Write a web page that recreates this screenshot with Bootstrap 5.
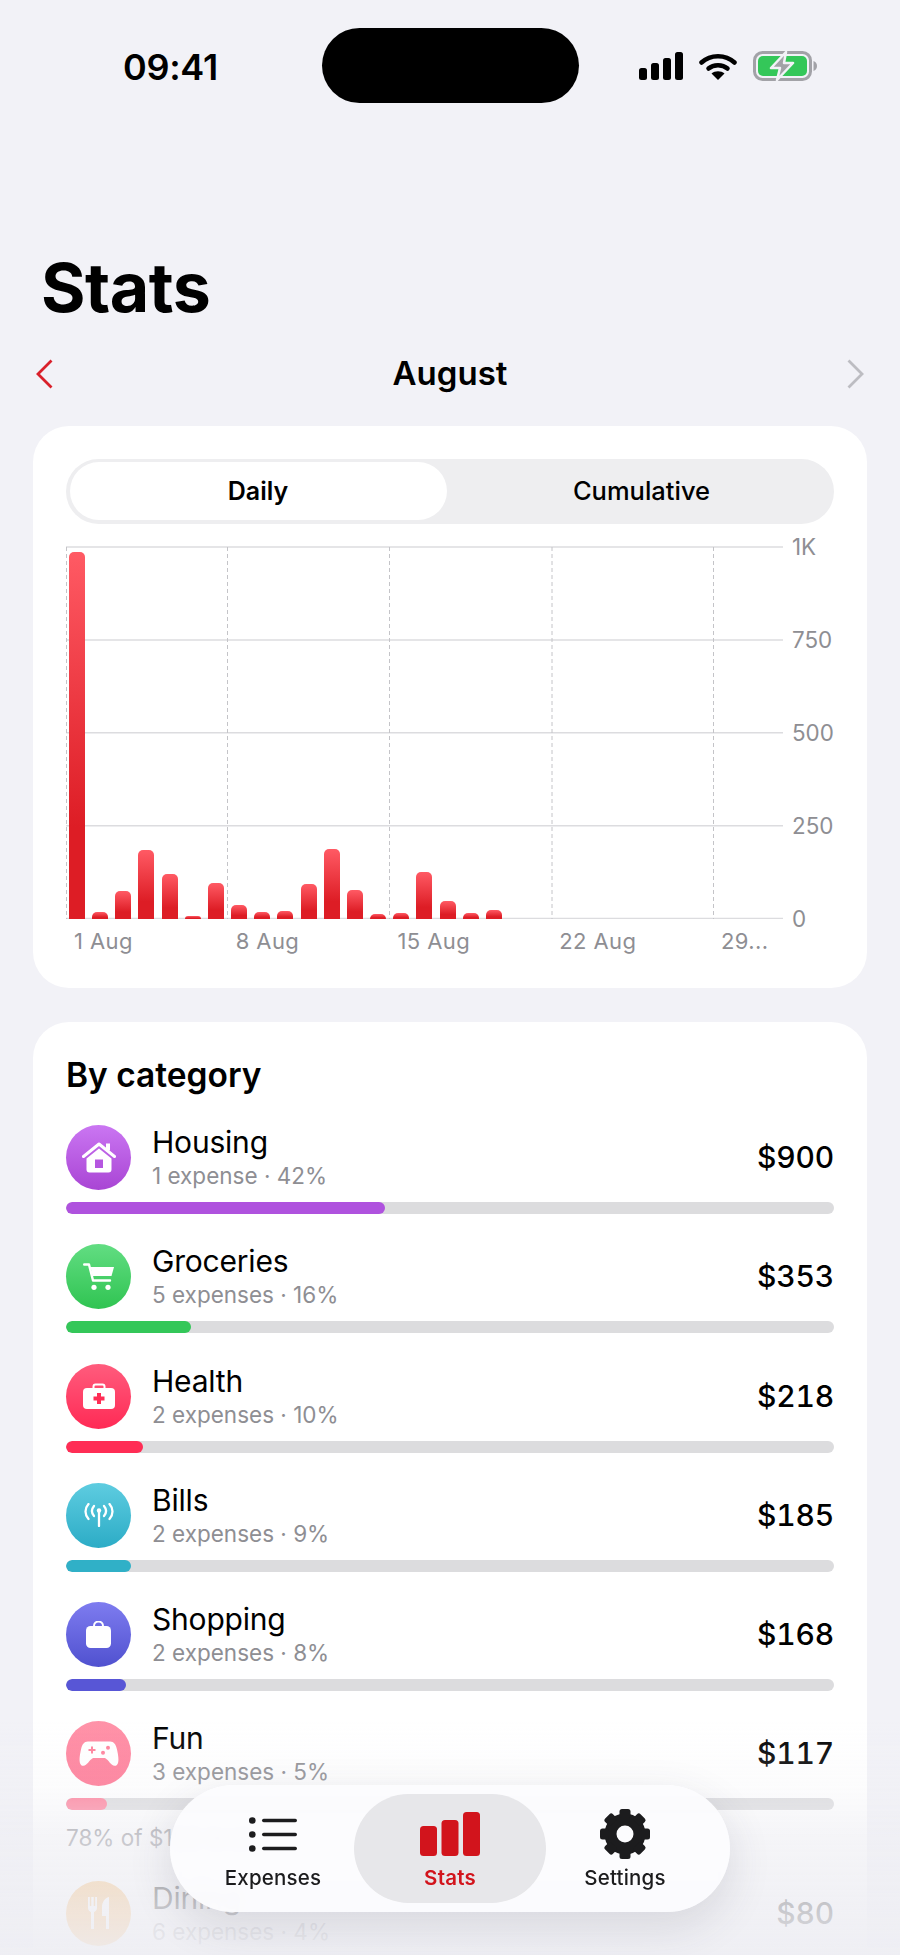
<!DOCTYPE html>
<html lang="en">

<head>
    <meta charset="UTF-8">
    <meta name="viewport" content="width=device-width, initial-scale=1.0">
    <title>Stats</title>
    <link href="https://cdn.jsdelivr.net/npm/bootstrap@5.3.0/dist/css/bootstrap.min.css" rel="stylesheet">
    <style>
        html, body { height: 1955px; overflow: hidden; }
        body { background: #f2f2f7; font-family: Inter, "Liberation Sans", sans-serif; color: #000; }

        /* status bar */
        .status-top { height: 103px; padding: 28px 0 0 123px; }
        .clock { width: 95px; margin-top: 2px; font-size: 36px; font-weight: 600; line-height: 75px; letter-spacing: -0.3px; white-space: nowrap; }
        .island { width: 257px; height: 75px; margin-left: 104px; background: #000; border-radius: 38px; }
        .status-icons { height: 80px; margin: -2px 0 0 60px; gap: 16px; }

        .page-title { margin: 144px 0 0 41px; font-size: 68px; font-weight: 700; line-height: 80px; letter-spacing: -0.5px; }
        .month-row { height: 60px; margin-top: 17px; padding: 0 36px; }
        .month-name { font-size: 33px; font-weight: 600; }

        /* cards */
        .panel { margin: 0 33px; border: 0; border-radius: 36px; background: #fff; }
        .chart-panel { height: 562.5px; margin-top: 21.5px; padding: 33px 33px 0; }
        .cat-panel { margin-top: 34px; padding: 32px 33px 0; }

        .segment { height: 65px; padding: 3.5px; background: #eeeef0; border-radius: 33px; }
        .segment .nav-link { height: 58px; padding: 0; color: #000; font-size: 25.5px; font-weight: 500; line-height: 58px; border-radius: 29px; }
        .segment .nav-link:first-child { width: 377px; flex-shrink: 0; }
        .segment .nav-link:last-child { padding-left: 6px; }
        .segment .nav-link.active { background: #fff; color: #000; font-weight: 600; font-size: 25px; }

        /* chart */
        .plot-wrap { margin-top: 22px; }
        .plot { width: 717px; height: 373px; flex-shrink: 0; }
        .plot-lines { position: absolute; inset: 0; }
        .plot-bars { position: absolute; inset: 0 0 0 3px; gap: 7.17px; }
        .day-bar { width: 16px; border-radius: 5px 5px 0 0; background: linear-gradient(#ff5a64, #dd1d25 75%); }
        .axis-y { width: 51px; height: 372px; margin-top: 1px; padding-left: 9px; color: #8e8e93; font-size: 22.4px; }
        .axis-y span { display: block; height: 0; line-height: 0; }
        .axis-x { width: 717px; margin-top: 8px; color: #8e8e93; font-size: 22px; line-height: 28px; letter-spacing: .4px; }
        .axis-x span { flex: 0 0 161.75px; padding-left: 8px; white-space: nowrap; }

        /* category rows */
        .cat-title { margin: 0 0 29px; font-size: 33.5px; font-weight: 600; line-height: 42px; }
        .cat-row { margin-bottom: 30.3px; }
        .cat-icon { width: 65px; height: 65px; margin-right: 21px; border-radius: 50%; }
        .cat-name { font-size: 30px; line-height: 35px; letter-spacing: -0.2px; }
        .cat-sub { margin: 1px 0 -1px; color: #8e8e93; font-size: 22.5px; line-height: 30px; }
        .cat-amount { font-size: 30px; font-weight: 500; font-variant-numeric: tabular-nums; letter-spacing: -0.2px; }
        .cat-track { height: 12px; margin-top: 12px; background: #dcdcde; border-radius: 6px; }
        .cat-track .progress-bar { border-radius: 6px; }
        .limit-note { margin: 14px 0 -2px; color: #8e8e93; font-size: 22.5px; line-height: 28px; }

        .bg-housing { background: linear-gradient(#ca76f2, #a945d4); }
        .bg-groceries { background: linear-gradient(#62dd82, #30c452); }
        .bg-health { background: linear-gradient(#ff5c7d, #ff2a55); }
        .bg-bills { background: linear-gradient(#5ecce0, #2cacc6); }
        .bg-shopping { background: linear-gradient(#7e7cf0, #5051cf); }
        .bg-fun { background: linear-gradient(#ff93a9, #ff7391); }
        .bg-dining { background: linear-gradient(#f7b55e, #ff9f2e); }

        /* fade and floating tabs */
        .bottom-fade {
            position: fixed; left: 0; right: 0; top: 1720px; height: 235px; pointer-events: none;
            background: linear-gradient(rgba(238, 238, 243, 0) 0, rgba(238, 238, 243, .2) 70px, rgba(238, 238, 243, .6) 117px, rgba(238, 238, 243, .83) 185px, rgba(238, 238, 243, .95) 235px);
        }
        .float-tabs {
            position: fixed; left: 170px; top: 1785px; width: 560px; height: 127px;
            padding: 9px 26px 9px 22px; flex-wrap: nowrap;
            background: rgba(252, 252, 254, .93); border-radius: 64px;
            box-shadow: 0 14px 44px rgba(60, 60, 80, .14);
            backdrop-filter: blur(5px);
        }
        .float-tabs .nav-link { padding: 15px 0 0; color: #1c1c1e; font-size: 20.5px; font-weight: 500; line-height: 27px; letter-spacing: .2px; text-align: center; }
        .float-tabs .tab-one { width: 162px; }
        .float-tabs .tab-two { width: 192px; }
        .float-tabs .tab-three { width: 158px; }
        .float-tabs .nav-link.active { background: #e7e7ea; color: #d2141c; font-weight: 600; border-radius: 55px; }
        .tab-glyph { height: 50px; margin-bottom: 5px; }
    </style>
</head>

<body>
    <!-- Status bar -->
    <div class="status-top d-flex align-items-start">
        <div class="clock">09:41</div>
        <div class="island"></div>
        <div class="status-icons d-flex align-items-center">
            <svg width="44" height="28" viewBox="0 0 44 28" fill="#000">
                <rect x="0" y="16" width="8" height="12" rx="2.5" />
                <rect x="12" y="11" width="8" height="17" rx="2.5" />
                <rect x="24" y="6" width="8" height="22" rx="2.5" />
                <rect x="36" y="0" width="8" height="28" rx="2.5" />
            </svg>
            <svg width="38" height="27" viewBox="0 0 38 27">
                <path d="M2.5 9.5C11.5 1 26.5 1 35.5 9.5" fill="none" stroke="#000" stroke-width="4.5" stroke-linecap="round" />
                <path d="M9.5 15.5C14.5 11 23.5 11 28.5 15.5" fill="none" stroke="#000" stroke-width="4.5" stroke-linecap="round" />
                <path d="M19 27L12.5 20.5C16 17.5 22 17.5 25.5 20.5Z" fill="#000" />
            </svg>
            <svg width="64" height="30" viewBox="0 0 64 30">
                <rect x="1.5" y="1.5" width="56" height="27" rx="8" fill="none" stroke="#a2a2a7" stroke-width="3" />
                <rect x="5" y="5" width="49" height="20" rx="5" fill="#34c759" />
                <path d="M60.5 10c2 .5 3.5 2.5 3.5 5s-1.5 4.5-3.5 5z" fill="#a2a2a7" />
                <path d="M33 1L18 17h9l-3 12 16-17h-9z" fill="#a2a2a7" stroke="#f2f2f7" stroke-width="2.5" stroke-linejoin="round" />
            </svg>
        </div>
    </div>

    <h1 class="page-title">Stats</h1>

    <div class="month-row d-flex align-items-center justify-content-between">
        <svg width="17" height="30" viewBox="0 0 17 30" fill="none" stroke="#d9202a" stroke-width="2.8">
            <path d="M15.5 1.5L2 15l13.5 13.5" />
        </svg>
        <div class="month-name">August</div>
        <svg width="17" height="30" viewBox="0 0 17 30" fill="none" stroke="#bdbdc2" stroke-width="2.8">
            <path d="M1.5 1.5L15 15 1.5 28.5" />
        </svg>
    </div>

    <!-- Chart card -->
    <div class="card panel chart-panel">
        <div class="nav segment flex-nowrap">
            <a class="nav-link active text-center" href="#">Daily</a>
            <a class="nav-link flex-fill text-center" href="#">Cumulative</a>
        </div>

        <div class="plot-wrap d-flex">
            <div class="plot position-relative">
                <svg class="plot-lines" width="717" height="373" viewBox="0 0 717 373">
                    <g stroke="#dcdcdf" stroke-width="1.5">
                        <line x1="0" y1="1" x2="717" y2="1" />
                        <line x1="0" y1="93.9" x2="717" y2="93.9" />
                        <line x1="0" y1="186.8" x2="717" y2="186.8" />
                        <line x1="0" y1="279.7" x2="717" y2="279.7" />
                        <line x1="0" y1="372.4" x2="717" y2="372.4" />
                    </g>
                    <g stroke="#c4c4c8" stroke-width="1" stroke-dasharray="4 3">
                        <line x1="0.5" y1="1" x2="0.5" y2="373" />
                        <line x1="161.5" y1="1" x2="161.5" y2="373" />
                        <line x1="323.5" y1="1" x2="323.5" y2="373" />
                        <line x1="486" y1="1" x2="486" y2="373" />
                        <line x1="647.5" y1="1" x2="647.5" y2="373" />
                    </g>
                </svg>
                <div class="plot-bars d-flex align-items-end">
                    <div class="day-bar" style="height:366.6px"></div>
                    <div class="day-bar" style="height:6.7px"></div>
                    <div class="day-bar" style="height:27.7px"></div>
                    <div class="day-bar" style="height:68.8px"></div>
                    <div class="day-bar" style="height:44.8px"></div>
                    <div class="day-bar" style="height:3px"></div>
                    <div class="day-bar" style="height:35.1px"></div>
                    <div class="day-bar" style="height:14px"></div>
                    <div class="day-bar" style="height:6.7px"></div>
                    <div class="day-bar" style="height:7.4px"></div>
                    <div class="day-bar" style="height:34.4px"></div>
                    <div class="day-bar" style="height:69.6px"></div>
                    <div class="day-bar" style="height:28.9px"></div>
                    <div class="day-bar" style="height:4.4px"></div>
                    <div class="day-bar" style="height:5.2px"></div>
                    <div class="day-bar" style="height:47px"></div>
                    <div class="day-bar" style="height:17.8px"></div>
                    <div class="day-bar" style="height:5.2px"></div>
                    <div class="day-bar" style="height:8.1px"></div>
                </div>
            </div>
            <div class="axis-y d-flex flex-column justify-content-between">
                <span>1K</span>
                <span>750</span>
                <span>500</span>
                <span>250</span>
                <span>0</span>
            </div>
        </div>
        <div class="axis-x d-flex">
            <span>1 Aug</span>
            <span>8 Aug</span>
            <span>15 Aug</span>
            <span>22 Aug</span>
            <span>29...</span>
        </div>
    </div>

    <!-- Categories card -->
    <div class="card panel cat-panel">
        <h2 class="cat-title">By category</h2>

        <div class="cat-row">
            <div class="d-flex align-items-center">
                <div class="cat-icon bg-housing d-flex align-items-center justify-content-center flex-shrink-0">
                    <svg width="34" height="31" viewBox="0 0 34 31" fill="#fff">
                        <path d="M1.5 14.5L17 2l15.5 12.5" fill="none" stroke="#fff" stroke-width="3" stroke-linecap="round" stroke-linejoin="round" />
                        <rect x="24" y="1.5" width="4" height="7" />
                        <path d="M17 6.5L29.5 16.5V27.5a3 3 0 0 1-3 3H7.5a3 3 0 0 1-3-3V16.5z" />
                        <rect x="13" y="17.5" width="8" height="8.5" fill="#b556e0" />
                    </svg>
                </div>
                <div class="flex-grow-1">
                    <div class="cat-name">Housing</div>
                    <div class="cat-sub">1 expense · 42%</div>
                </div>
                <div class="cat-amount">$900</div>
            </div>
            <div class="progress cat-track"><div class="progress-bar" style="width:41.6%; background:#af52de"></div></div>
        </div>

        <div class="cat-row">
            <div class="d-flex align-items-center">
                <div class="cat-icon bg-groceries d-flex align-items-center justify-content-center flex-shrink-0">
                    <svg width="31" height="27" viewBox="0 0 31 27" fill="#fff">
                        <path d="M1.2 1.5H6L10 17.5H27" fill="none" stroke="#fff" stroke-width="2.4" stroke-linecap="round" stroke-linejoin="round" />
                        <path d="M7.5 4H31L28.5 13H9.5z" />
                        <circle cx="11" cy="24.3" r="2.6" />
                        <circle cx="25" cy="24.3" r="2.6" />
                    </svg>
                </div>
                <div class="flex-grow-1">
                    <div class="cat-name">Groceries</div>
                    <div class="cat-sub">5 expenses · 16%</div>
                </div>
                <div class="cat-amount">$353</div>
            </div>
            <div class="progress cat-track"><div class="progress-bar" style="width:16.3%; background:#34c759"></div></div>
        </div>

        <div class="cat-row">
            <div class="d-flex align-items-center">
                <div class="cat-icon bg-health d-flex align-items-center justify-content-center flex-shrink-0">
                    <svg width="32" height="26" viewBox="0 0 32 26" fill="#fff">
                        <path d="M10.5 6V3.5a2 2 0 0 1 2-2h7a2 2 0 0 1 2 2V6" fill="none" stroke="#fff" stroke-width="2" />
                        <rect x="0" y="5" width="32" height="21" rx="4" />
                        <path d="M14 10h4v3.5h3.5v4H18V21h-4v-3.5h-3.5v-4H14z" fill="#ff2d55" />
                    </svg>
                </div>
                <div class="flex-grow-1">
                    <div class="cat-name">Health</div>
                    <div class="cat-sub">2 expenses · 10%</div>
                </div>
                <div class="cat-amount">$218</div>
            </div>
            <div class="progress cat-track"><div class="progress-bar" style="width:10%; background:#ff2d55"></div></div>
        </div>

        <div class="cat-row">
            <div class="d-flex align-items-center">
                <div class="cat-icon bg-bills d-flex align-items-center justify-content-center flex-shrink-0">
                    <svg width="30" height="24" viewBox="0 0 30 24" fill="none" stroke="#fff" stroke-width="2.3" stroke-linecap="round">
                        <path d="M15 8.5V23" />
                        <circle cx="15" cy="7.5" r="2.2" fill="#fff" stroke="none" />
                        <path d="M10 3C7.5 6 7.5 10 10 13" />
                        <path d="M20 3c2.5 3 2.5 7 0 10" />
                        <path d="M4.5 1C.5 5.5 .5 11.5 4.5 16" />
                        <path d="M25.5 1c4 4.5 4 10.5 0 15" />
                    </svg>
                </div>
                <div class="flex-grow-1">
                    <div class="cat-name">Bills</div>
                    <div class="cat-sub">2 expenses · 9%</div>
                </div>
                <div class="cat-amount">$185</div>
            </div>
            <div class="progress cat-track"><div class="progress-bar" style="width:8.5%; background:#30b0c7"></div></div>
        </div>

        <div class="cat-row">
            <div class="d-flex align-items-center">
                <div class="cat-icon bg-shopping d-flex align-items-center justify-content-center flex-shrink-0">
                    <svg width="25" height="27" viewBox="0 0 25 27" fill="#fff">
                        <path d="M8 6V5a4.5 4.5 0 0 1 9 0v1" fill="none" stroke="#fff" stroke-width="2" />
                        <rect x="0" y="5" width="25" height="22" rx="4.5" />
                    </svg>
                </div>
                <div class="flex-grow-1">
                    <div class="cat-name">Shopping</div>
                    <div class="cat-sub">2 expenses · 8%</div>
                </div>
                <div class="cat-amount">$168</div>
            </div>
            <div class="progress cat-track"><div class="progress-bar" style="width:7.8%; background:#5856d6"></div></div>
        </div>

        <div class="cat-row">
            <div class="d-flex align-items-center">
                <div class="cat-icon bg-fun d-flex align-items-center justify-content-center flex-shrink-0">
                    <svg width="40" height="25" viewBox="0 0 40 25" fill="#fff">
                        <path d="M9 .5H31C35 .5 37 3.5 38 8.5 39.5 15 41 24 36 24.8 32 25.2 30 19 26 17H14C10 19 8 25.2 4 24.8-1 24 .5 15 2 8.5 3 3.5 5 .5 9 .5Z" />
                        <path d="M12 5.5h2V8h2.5v2H14v2.5h-2V10H9.5V8H12z" fill="#ff7f9a" />
                        <circle cx="29" cy="6.7" r="2" fill="#ff7f9a" />
                        <circle cx="24" cy="11.7" r="2" fill="#ff7f9a" />
                    </svg>
                </div>
                <div class="flex-grow-1">
                    <div class="cat-name">Fun</div>
                    <div class="cat-sub">3 expenses · 5%</div>
                </div>
                <div class="cat-amount">$117</div>
            </div>
            <div class="progress cat-track"><div class="progress-bar" style="width:5.4%; background:#ff7f9a"></div></div>
            <div class="limit-note">78% of $150 limit</div>
        </div>

        <div class="cat-row">
            <div class="d-flex align-items-center">
                <div class="cat-icon bg-dining d-flex align-items-center justify-content-center flex-shrink-0">
                    <svg width="21" height="32" viewBox="0 0 21 32" fill="#fff">
                        <path d="M0 0h1.8v9h1.5V0h2.4v9h1.5V0H9v11c0 2-1.5 3.5-3 4V32H3V15c-1.5-.5-3-2-3-4z" />
                        <path d="M21 0v32h-3V19h-4V10C14 5 17 1 21 0z" />
                    </svg>
                </div>
                <div class="flex-grow-1">
                    <div class="cat-name">Dining</div>
                    <div class="cat-sub">6 expenses · 4%</div>
                </div>
                <div class="cat-amount">$80</div>
            </div>
            <div class="progress cat-track"><div class="progress-bar" style="width:4%; background:#ff9f2e"></div></div>
        </div>
    </div>

    <div class="bottom-fade"></div>

    <!-- Floating tab bar -->
    <nav class="nav float-tabs">
        <a class="nav-link tab-one" href="#">
            <div class="tab-glyph d-flex align-items-center justify-content-center">
                <svg width="48" height="35" viewBox="0 0 48 35" fill="#1c1c1e">
                    <circle cx="3.3" cy="3.5" r="3.3" />
                    <circle cx="3.3" cy="17.5" r="3.3" />
                    <circle cx="3.3" cy="31.5" r="3.3" />
                    <rect x="13" y="1.8" width="35" height="3.4" rx="1.7" />
                    <rect x="13" y="15.8" width="35" height="3.4" rx="1.7" />
                    <rect x="13" y="29.8" width="35" height="3.4" rx="1.7" />
                </svg>
            </div>
            Expenses
        </a>
        <a class="nav-link tab-two active" href="#">
            <div class="tab-glyph d-flex align-items-center justify-content-center">
                <svg width="60" height="44" viewBox="0 0 60 44" fill="#d2141c">
                    <rect x="0" y="14" width="17" height="30" rx="3.5" />
                    <rect x="21.5" y="8" width="17" height="36" rx="3.5" />
                    <rect x="43" y="0" width="17" height="44" rx="3.5" />
                </svg>
            </div>
            Stats
        </a>
        <a class="nav-link tab-three" href="#">
            <div class="tab-glyph d-flex align-items-center justify-content-center">
                <svg width="50" height="50" viewBox="0 0 50 50" fill="#1c1c1e">
                    <circle cx="25" cy="25" r="14.5" fill="none" stroke="#1c1c1e" stroke-width="12" />
                    <rect x="19.5" y="0" width="11" height="9" rx="2.5" />
                    <rect x="19.5" y="0" width="11" height="9" rx="2.5" transform="rotate(45 25 25)" />
                    <rect x="19.5" y="0" width="11" height="9" rx="2.5" transform="rotate(90 25 25)" />
                    <rect x="19.5" y="0" width="11" height="9" rx="2.5" transform="rotate(135 25 25)" />
                    <rect x="19.5" y="0" width="11" height="9" rx="2.5" transform="rotate(180 25 25)" />
                    <rect x="19.5" y="0" width="11" height="9" rx="2.5" transform="rotate(225 25 25)" />
                    <rect x="19.5" y="0" width="11" height="9" rx="2.5" transform="rotate(270 25 25)" />
                    <rect x="19.5" y="0" width="11" height="9" rx="2.5" transform="rotate(315 25 25)" />
                </svg>
            </div>
            Settings
        </a>
    </nav>

    <script src="https://cdn.jsdelivr.net/npm/bootstrap@5.3.0/dist/js/bootstrap.bundle.min.js"></script>
</body>

</html>
